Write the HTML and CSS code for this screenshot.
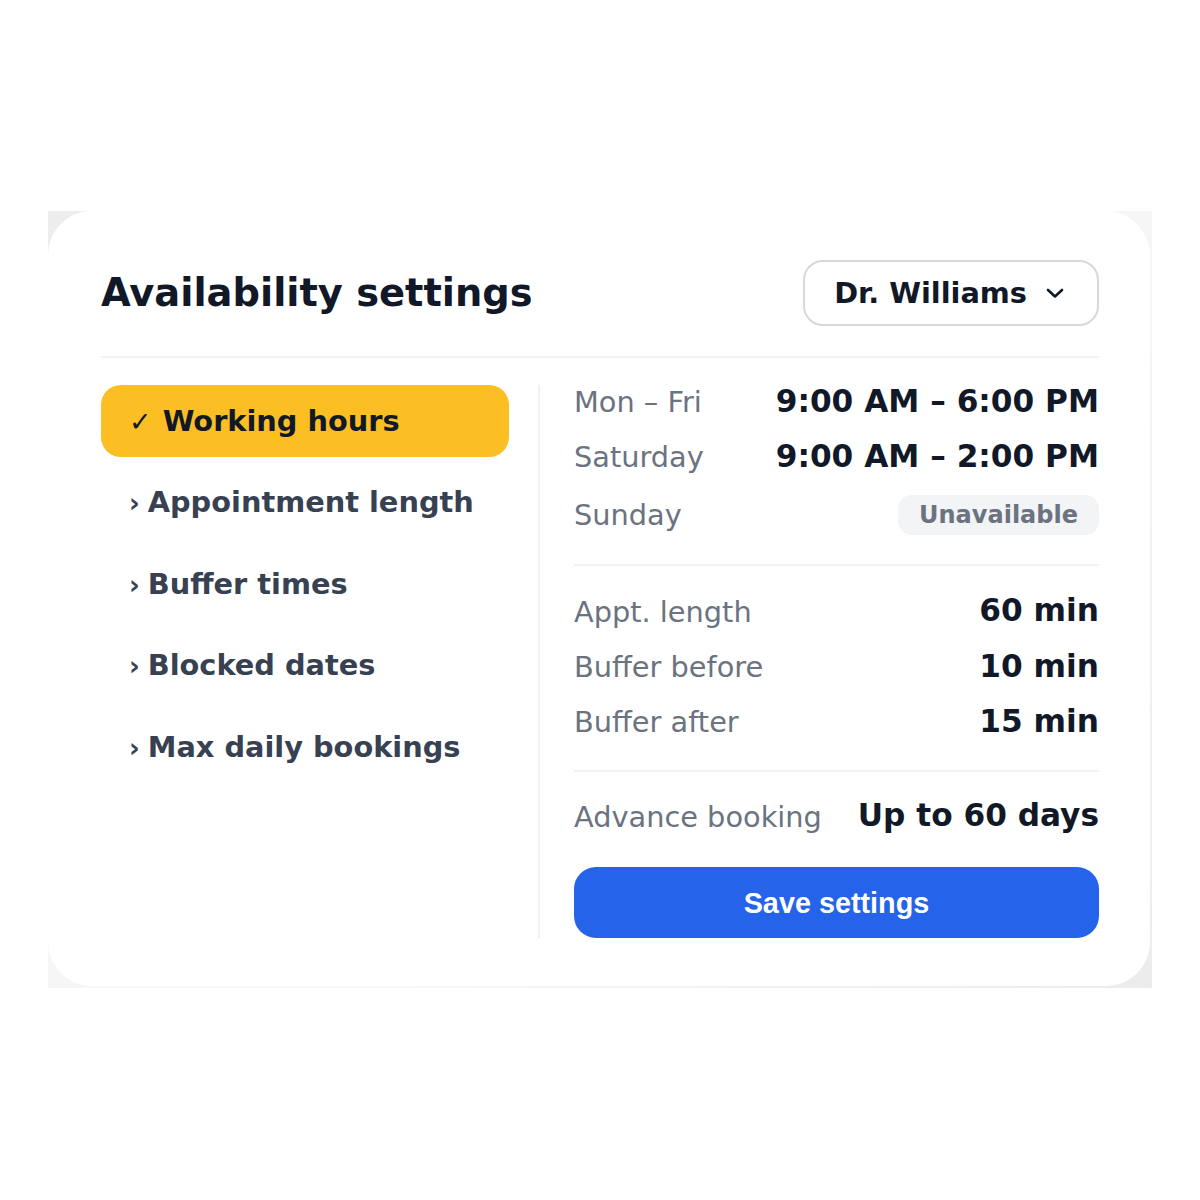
FILE: index.html
```html
<!DOCTYPE html>
<html lang="en">
<head>
<meta charset="utf-8">
<title>Availability settings</title>
<link rel="stylesheet" href="styles.css">
</head>
<body>
<main class="page">
  <div class="shell">
    <section class="card">
      <header class="header">
        <h1 class="title">Availability settings</h1>
        <button class="select" type="button">
          <span>Dr. Williams</span>
          <svg class="select-chev" width="18" height="11" viewBox="0 0 18 11" aria-hidden="true">
            <polyline points="2,2 9,8.5 16,2" fill="none" stroke="#111827" stroke-width="2.6" stroke-linecap="round" stroke-linejoin="round"/>
          </svg>
        </button>
      </header>
      <div class="body">
        <nav class="nav">
          <a class="nav-item active"><span class="check">✓</span>Working hours</a>
          <a class="nav-item"><span class="chev">›</span>Appointment length</a>
          <a class="nav-item"><span class="chev">›</span>Buffer times</a>
          <a class="nav-item"><span class="chev">›</span>Blocked dates</a>
          <a class="nav-item"><span class="chev">›</span>Max daily bookings</a>
        </nav>
        <div class="panel">
          <div class="section first">
            <div class="row"><span class="label">Mon – Fri</span><span class="value">9:00 AM – 6:00 PM</span></div>
            <div class="row"><span class="label">Saturday</span><span class="value">9:00 AM – 2:00 PM</span></div>
            <div class="row"><span class="label">Sunday</span><span class="badge">Unavailable</span></div>
          </div>
          <div class="section middle">
            <div class="row"><span class="label">Appt. length</span><span class="value">60 min</span></div>
            <div class="row"><span class="label">Buffer before</span><span class="value">10 min</span></div>
            <div class="row"><span class="label">Buffer after</span><span class="value">15 min</span></div>
          </div>
          <div class="section last">
            <div class="row"><span class="label">Advance booking</span><span class="value">Up to 60 days</span></div>
            <button class="save" type="button">Save settings</button>
          </div>
        </div>
      </div>
    </section>
  </div>
</main>
</body>
</html>
```

FILE: styles.css
```css
* { box-sizing: border-box; }

html, body {
  margin: 0;
  padding: 0;
  background: #ffffff;
}

body {
  font-family: "DejaVu Sans", "Noto Sans", sans-serif;
  color: #111827;
}

.page {
  padding: 211px 48px 0 48px;
}

.shell {
  width: 1104px;
  padding: 0 2px 2px 0;
  background: linear-gradient(135deg, #ededed 0%, #f6f6f6 40%, #f6f6f6 60%, #ececec 100%);
}

.card {
  background: #ffffff;
  border-radius: 44px;
  padding: 49px 51px 48px 53px;
}

.header {
  display: flex;
  justify-content: space-between;
  align-items: center;
  padding-bottom: 30px;
  border-bottom: 2px solid #f1f2f4;
}

.title {
  margin: 0;
  font-size: 38.4px;
  font-weight: 700;
  line-height: 1.2;
  color: #111827;
}

.select {
  display: flex;
  align-items: center;
  gap: 19px;
  height: 66px;
  padding: 0 33px 0 29px;
  border: 2px solid #d5d8de;
  border-radius: 20px;
  background: #ffffff;
  font-family: "DejaVu Sans", sans-serif;
  font-size: 28.8px;
  font-weight: 700;
  color: #111827;
  line-height: 1.2;
}

.select-chev { display: block; }

.body {
  display: flex;
  margin-top: 27px;
}

.nav {
  width: 408px;
  flex: none;
  display: flex;
  flex-direction: column;
  gap: 9.6px;
}

.nav-item {
  display: flex;
  align-items: baseline;
  height: 72px;
  padding: 18.7px 28px 0;
  border-radius: 20px;
  font-size: 28.8px;
  font-weight: 700;
  line-height: 34.6px;
  color: #374151;
  white-space: nowrap;
}

.nav-item.active {
  background: #fbbf24;
  color: #111827;
}

.check {
  font-size: 27px;
  font-weight: 400;
  line-height: 1;
  margin-right: 11px;
}

.chev {
  font-size: 26px;
  font-weight: 700;
  line-height: 1;
  margin-right: 8px;
}

.panel {
  flex: 1;
  margin-left: 29px;
  border-left: 2px solid #f1f2f4;
  padding-left: 34px;
}

.section {
  display: flex;
  flex-direction: column;
  gap: 20.6px;
}

.section.first {
  padding-bottom: 29px;
  border-bottom: 2px solid #f1f2f4;
}

.section.middle {
  padding: 28.5px 0 30px;
  border-bottom: 2px solid #f1f2f4;
}

.section.last {
  padding-top: 28px;
  gap: 0;
}

.row {
  display: flex;
  justify-content: space-between;
  align-items: center;
  height: 34.6px;
  font-size: 28.8px;
  line-height: 34.6px;
}

.row:has(.badge) { height: 40px; }

.label {
  color: #6b7280;
  font-weight: 400;
}

.value {
  color: #111827;
  font-size: 31.2px;
  font-weight: 700;
  line-height: 34.6px;
  margin-top: -3px;
}

.badge {
  display: inline-block;
  padding: 5.6px 21px;
  border-radius: 14px;
  background: #f3f4f6;
  color: #6b7280;
  font-size: 24px;
  font-weight: 700;
  line-height: 28.8px;
}

.save {
  display: block;
  width: 100%;
  margin-top: 33px;
  height: 71px;
  border: none;
  border-radius: 22px;
  background: #2563eb;
  color: #ffffff;
  font-family: "Liberation Sans", Arial, sans-serif;
  font-size: 28.8px;
  font-weight: 700;
  line-height: 34.6px;
}
```
